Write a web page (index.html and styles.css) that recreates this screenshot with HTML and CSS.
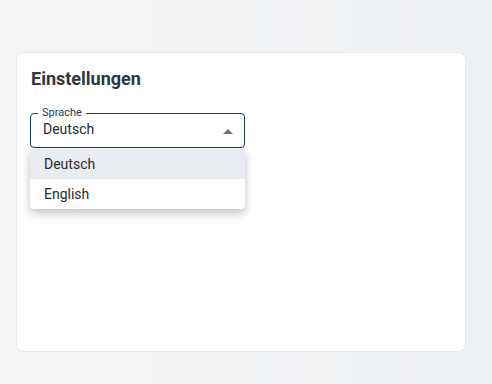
FILE: index.html
```html
<!DOCTYPE html>
<html lang="de">
<head>
<meta charset="utf-8">
<title>Einstellungen</title>
<link rel="stylesheet" href="styles.css">
</head>
<body>
<div class="page">
	<div class="card">
		<h2 class="title">Einstellungen</h2>
		<div class="field">
			<fieldset class="select">
				<legend>Sprache</legend>
				<div class="value">Deutsch</div>
				<span class="arrow"></span>
			</fieldset>
			<ul class="menu">
				<li class="active">Deutsch</li>
				<li>English</li>
			</ul>
		</div>
	</div>
</div>
</body>
</html>
```
FILE: styles.css
```css
* {
	box-sizing: border-box;
}

html, body {
	margin: 0;
	padding: 0;
	height: 100%;
}

body {
	font-family: Roboto, "Liberation Sans", sans-serif;
	background: linear-gradient(90deg, #f4f5f6 0%, #eef1f4 100%);
	color: #2b323b;
}

.page {
	padding: 52px 26px 32px 16px;
}

.card {
	width: 450px;
	height: 300px;
	background: #fff;
	border: 1px solid #e6e9ed;
	border-radius: 8px;
	padding: 14px 13px;
}

.title {
	margin: 0 0 16px 1px;
	font-size: 18px;
	line-height: 24px;
	font-weight: 700;
	color: #2f3640;
}

.field {
	position: relative;
	width: 215px;
}

.select {
	position: relative;
	margin: 0;
	padding: 0 7px 9px 7px;
	border: 1px solid #1d3b5e;
	border-radius: 4px;
	height: 41px;
}

.select legend {
	padding: 0 4px;
	font-size: 11px;
	line-height: 12px;
	color: #1d3b5e;
}

.value {
	padding-left: 5px;
	font-size: 14px;
	line-height: 20px;
	color: #1f2a36;
}

.arrow {
	position: absolute;
	right: 11px;
	top: 10px;
	width: 0;
	height: 0;
	border-style: solid;
	border-width: 0 5px 5px 5px;
	border-color: transparent transparent #757575 transparent;
}

.menu {
	position: absolute;
	left: 0;
	top: 42px;
	width: 215px;
	margin: 0;
	padding: 0;
	list-style: none;
	background: #fff;
	border-radius: 4px;
	box-shadow: 0 4px 10px rgba(0, 0, 0, .25);
}

.menu li {
	height: 30px;
	line-height: 30px;
	padding-left: 14px;
	font-size: 14px;
	color: #2a2a2a;
}

.menu li.active {
	background: #e9ecf0;
}
```
